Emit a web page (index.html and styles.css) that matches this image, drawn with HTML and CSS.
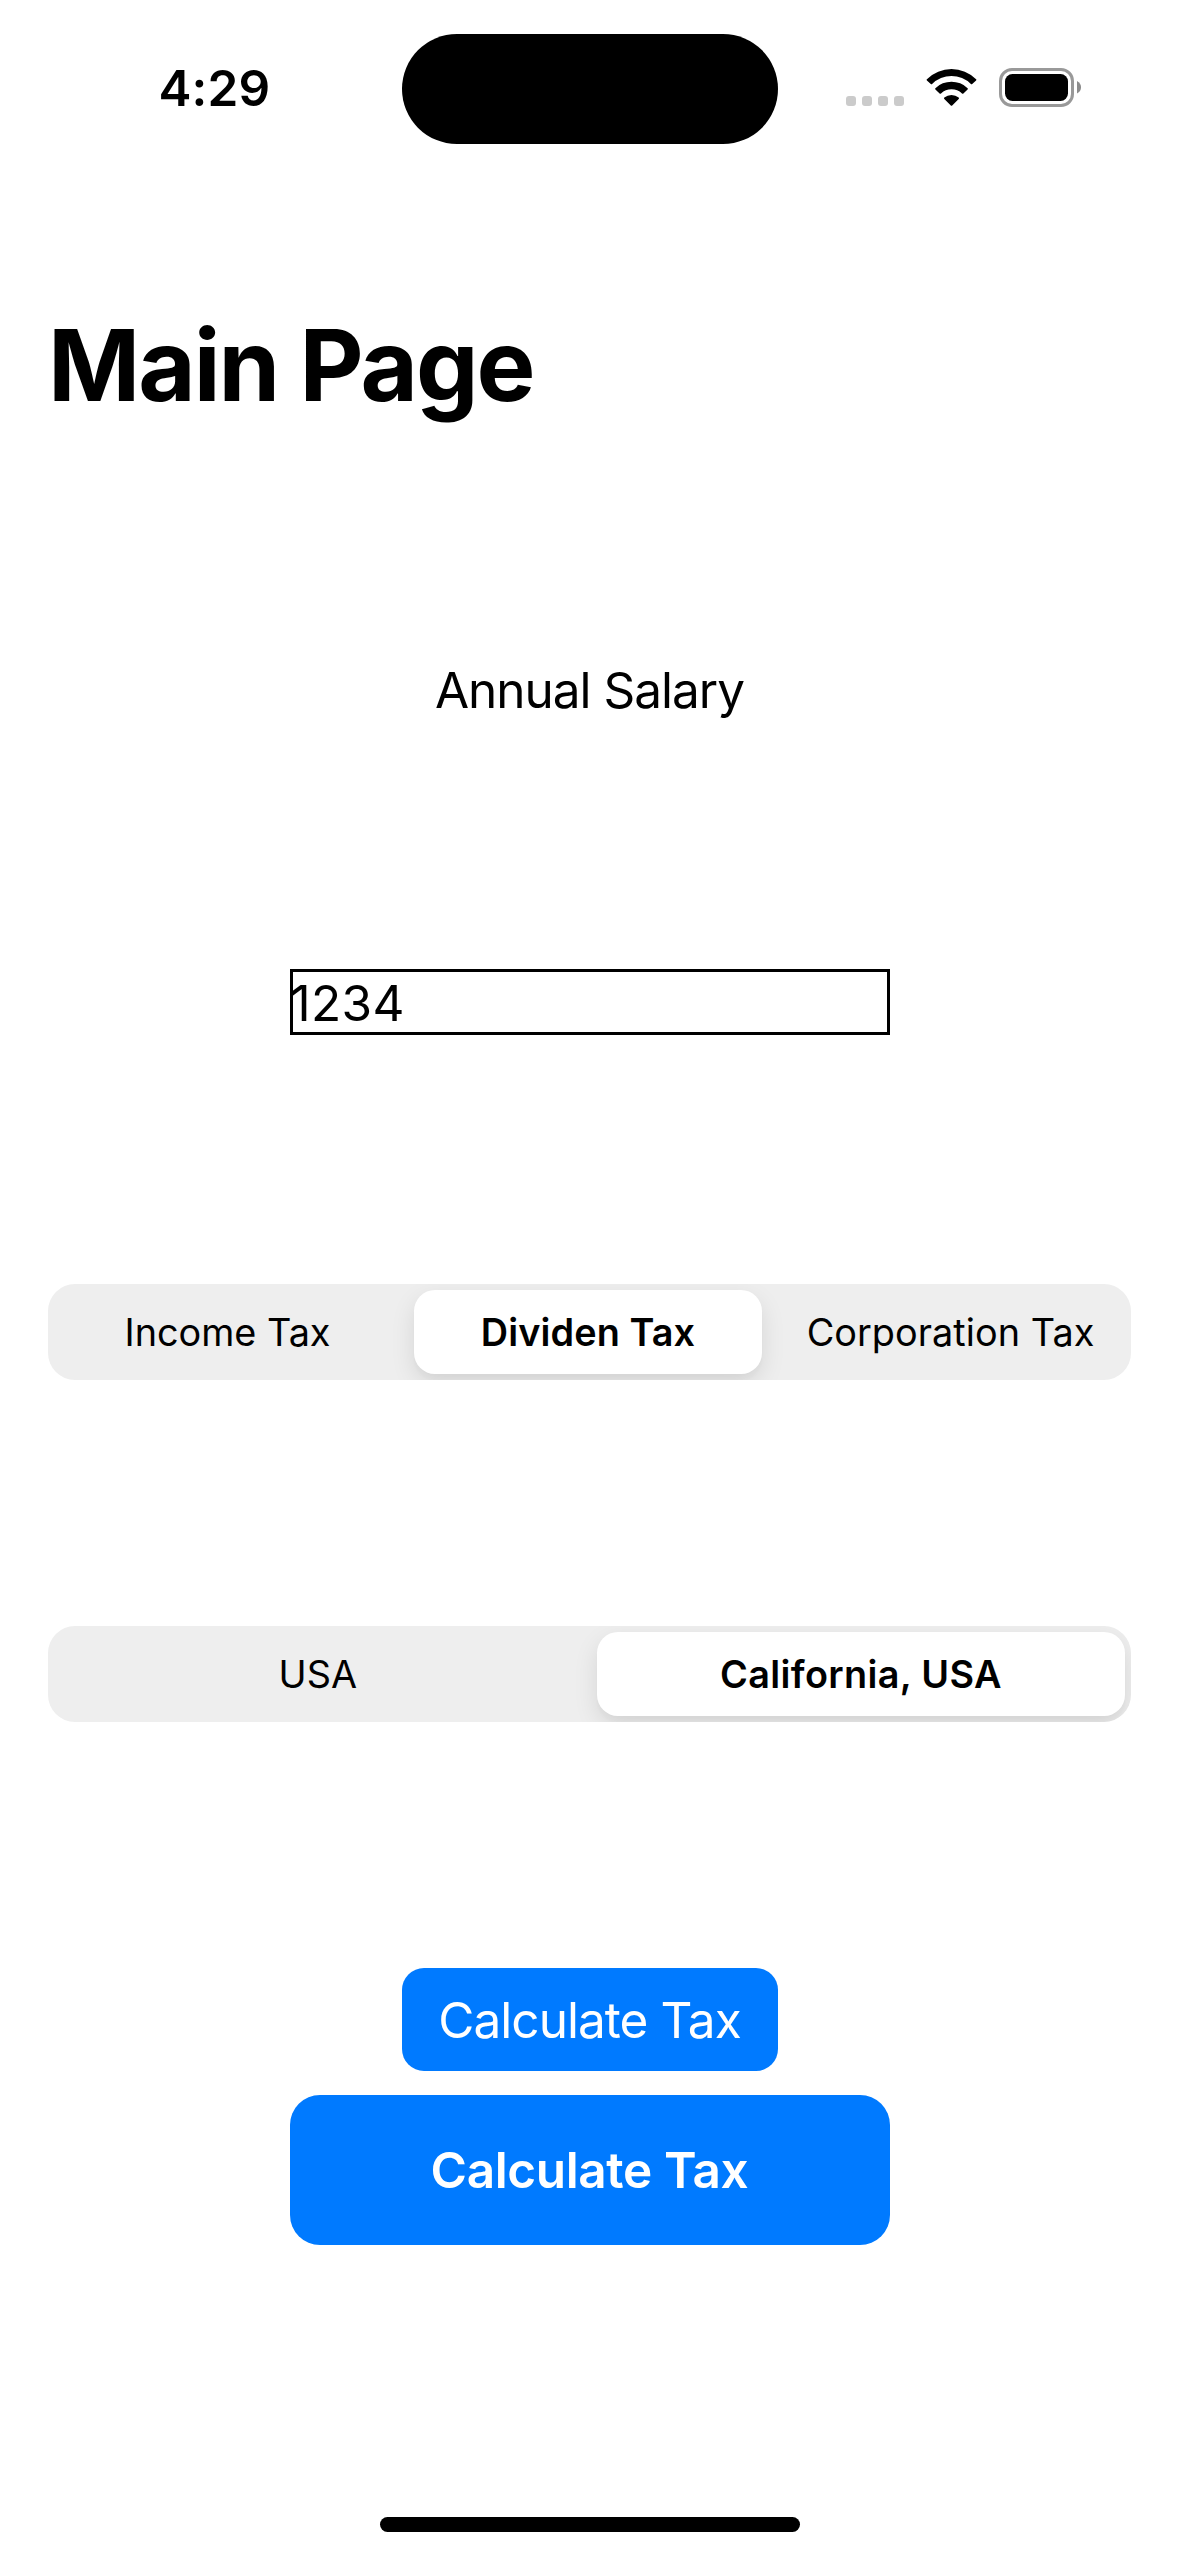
FILE: index.html
```html
<!DOCTYPE html>
<html lang="en">
<head>
<meta charset="utf-8">
<title>Main Page</title>
<link rel="stylesheet" href="styles.css">
</head>
<body>
<div class="screen">
  <header class="status">
    <time class="clock">4:29</time>
    <div class="island"></div>
    <div class="indicators">
      <svg class="cellular" viewBox="0 0 58 41" width="58" height="41" fill="#cbcbcb">
        <rect x="0" y="28" width="10" height="10" rx="3"/>
        <rect x="16" y="28" width="10" height="10" rx="3"/>
        <rect x="32" y="28" width="10" height="10" rx="3"/>
        <rect x="48" y="28" width="10" height="10" rx="3"/>
      </svg>
      <svg class="wifi" viewBox="926 68 51 41" width="51" height="41">
        <path d="M926.9 79.2A35 35 0 0 1 976.1 79.2Q976.7 79.8 976.1 80.4L972.2 84Q971.5 84.6 970.9 84A27.5 27.5 0 0 0 932.1 84Q931.5 84.6 930.8 84L926.9 80.4Q926.3 79.8 926.9 79.2Z"/>
        <path d="M935.4 88.2A23 23 0 0 1 967.6 88.2Q968.2 88.8 967.6 89.4L963.4 93.4Q962.7 94 962 93.4A15.5 15.5 0 0 0 941 93.4Q940.3 94 939.6 93.4L935.4 89.4Q934.8 88.8 935.4 88.2Z"/>
        <path d="M944.3 97.5A11.3 11.3 0 0 1 958.7 97.5Q959.4 98.2 958.7 98.9L952.2 105.5Q951.5 106.2 950.8 105.5L944.3 98.9Q943.6 98.2 944.3 97.5Z"/>
      </svg>
      <svg class="battery" viewBox="999 68 82 41" width="82" height="41">
        <rect x="1000.5" y="69.5" width="72" height="36" rx="11.5" fill="none" stroke="#999" stroke-width="3"/>
        <rect x="1005" y="74" width="63" height="27" rx="7.5"/>
        <path d="M1077 81Q1081 83.2 1081 87.3T1077 93.6Z" fill="#8c8c8c"/>
      </svg>
    </div>
  </header>
  <main class="content">
    <h1 class="title">Main Page</h1>
    <label class="label" for="salary">Annual Salary</label>
    <input class="field" id="salary" type="text" value="1234">
    <div class="segmented thirds">
      <button class="segment">Income Tax</button>
      <button class="segment selected dividend">Dividen Tax</button>
      <button class="segment corporation">Corporation Tax</button>
    </div>
    <div class="segmented halves">
      <button class="segment">USA</button>
      <button class="segment selected state">California, USA</button>
    </div>
    <button class="button compact">Calculate Tax</button>
    <button class="button large">Calculate Tax</button>
  </main>
  <div class="home-indicator"></div>
</div>
</body>
</html>
```
FILE: styles.css
```css
* { box-sizing: border-box; }

body {
  margin: 0;
  background: #fff;
  color: #000;
  font-family: Inter, "Liberation Sans", sans-serif;
}

button, input {
  margin: 0;
  padding: 0;
  border: 0;
  font: inherit;
  color: inherit;
  background: none;
}

.screen {
  display: flex;
  flex-direction: column;
  width: 1179px;
  height: 2556px;
  padding-bottom: 24px;
}

.status {
  display: grid;
  grid-template-columns: 402px 376px 1fr;
  align-items: center;
  height: 177px;
}

.clock {
  padding: 0 0 2px 158.5px;
  font-size: 49.5px;
  font-weight: 600;
  line-height: 60px;
  letter-spacing: 0.1px;
}

.island {
  height: 110px;
  margin-top: 1px;
  border-radius: 55px;
  background: #000;
}

.indicators {
  display: flex;
  padding-left: 68px;
}

.wifi { margin-left: 22px; }
.battery { margin-left: 22px; }

.content {
  display: flex;
  flex-direction: column;
  align-items: center;
  padding: 128px 48px 0;
}

.title {
  align-self: flex-start;
  margin: 0;
  font-size: 99px;
  font-weight: 700;
  line-height: 120px;
  letter-spacing: -2px;
}

.label {
  margin-top: 235px;
  font-size: 49.5px;
  line-height: 60px;
  letter-spacing: -1px;
}

.field {
  width: 600px;
  height: 66px;
  margin-top: 249px;
  padding-top: 2px;
  border: 3px solid #000;
  font-size: 49.5px;
  letter-spacing: 0.4px;
  text-indent: -2px;
}

.segmented {
  display: grid;
  width: 1083px;
  height: 96px;
  border-radius: 27px;
  background: #eee;
  overflow: hidden;
}

.thirds {
  grid-template-columns: repeat(3, 1fr);
  margin-top: 249px;
}

.halves {
  grid-template-columns: repeat(2, 1fr);
  margin-top: 246px;
}

.segment {
  padding-right: 2px;
  font-size: 37.8px;
  font-weight: 430;
  line-height: 46px;
}

.corporation {
  padding-right: 0;
  letter-spacing: 0.05px;
}

.selected {
  padding-right: 0;
  border-radius: 21px;
  background: #fff;
  box-shadow: 0 9px 24px rgba(0, 0, 0, 0.1), 0 6px 3px rgba(0, 0, 0, 0.02);
  font-weight: 560;
}

.dividend {
  margin: 6px 8px 6px 5px;
  letter-spacing: 0.1px;
}

.state {
  margin: 6px 6px 6px 7.5px;
  letter-spacing: 0.35px;
}

.button {
  background: #007aff;
  color: #fff;
  font-size: 49.5px;
  line-height: 60px;
}

.compact {
  width: 376px;
  height: 103px;
  margin-top: 246px;
  border-radius: 22px;
  letter-spacing: -0.95px;
}

.large {
  width: 600px;
  height: 150px;
  margin-top: 24px;
  border-radius: 30px;
  font-weight: 600;
  letter-spacing: -0.38px;
}

.home-indicator {
  align-self: center;
  width: 420px;
  height: 15px;
  margin-top: auto;
  border-radius: 8px;
  background: #000;
}
```
